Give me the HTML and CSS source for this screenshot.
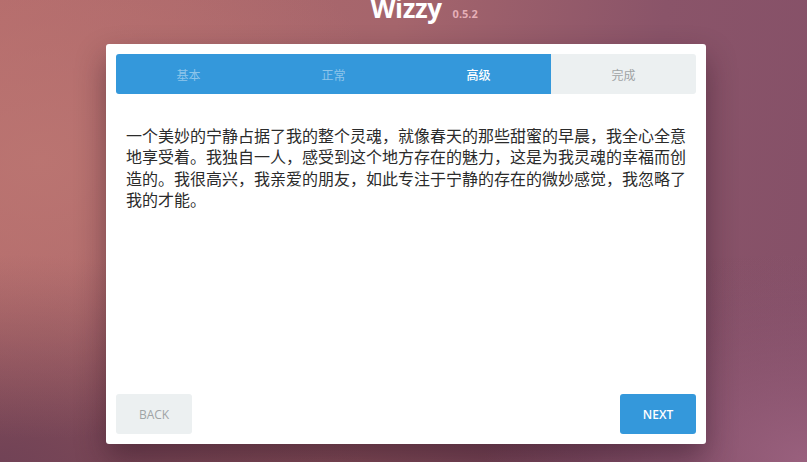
FILE: index.html
```html
<!DOCTYPE html>
<html lang="zh">
<head>
<meta charset="utf-8">
<title>Wizzy</title>
<link rel="stylesheet" href="styles.css">
</head>
<body>
<div class="page">
  <header class="brand">
    <span class="brand-spacer"></span>
    <span class="brand-name">Wizzy</span>
    <span class="brand-version">0.5.2</span>
  </header>
  <main class="wizard">
    <nav class="steps">
      <div class="step step-done">基本</div>
      <div class="step step-done">正常</div>
      <div class="step step-active">高级</div>
      <div class="step step-todo">完成</div>
    </nav>
    <section class="content">
      <p>一个美妙的宁静占据了我的整个灵魂，就像春天的那些甜蜜的早晨，我全心全意地享受着。我独自一人，感受到这个地方存在的魅力，这是为我灵魂的幸福而创造的。我很高兴，我亲爱的朋友，如此专注于宁静的存在的微妙感觉，我忽略了我的才能。</p>
    </section>
    <footer class="actions">
      <button class="btn btn-back">BACK</button>
      <button class="btn btn-next">NEXT</button>
    </footer>
  </main>
</div>
</body>
</html>
```

FILE: styles.css
```css
html, body {
  margin: 0;
  padding: 0;
  height: 100%;
}
body {
  font-family: "Open Sans", "Noto Sans CJK SC", sans-serif;
  background:
    radial-gradient(ellipse 45% 60% at 5% 35%, rgba(188, 118, 114, 0.85), rgba(188, 118, 114, 0) 100%),
    radial-gradient(ellipse 40% 45% at 100% 100%, rgba(158, 100, 130, 0.9), rgba(158, 100, 130, 0) 100%),
    radial-gradient(ellipse 45% 45% at 0% 100%, rgba(112, 66, 86, 0.95), rgba(112, 66, 86, 0) 100%),
    linear-gradient(180deg, rgba(0, 0, 0, 0) 55%, rgba(70, 30, 50, 0.35) 100%),
    linear-gradient(100deg, #b36a6b 0%, #a5656c 45%, #8a5469 75%, #855068 100%);
  overflow: hidden;
}
.page {
  display: flex;
  flex-direction: column;
  align-items: center;
  height: 100%;
  padding-left: 5px;
  box-sizing: border-box;
}
.brand {
  align-self: stretch;
  margin-top: -9px;
  height: 34px;
  line-height: 34px;
  display: grid;
  grid-template-columns: 1fr auto 1fr;
  align-items: baseline;
  margin-bottom: 19px;
}
.brand-name {
  font-family: "Open Sans", sans-serif;
  font-weight: 700;
  font-size: 26px;
  letter-spacing: -0.4px;
  color: #ffffff;
}
.brand-version {
  justify-self: start;
  margin-left: 11px;
  font-family: "Open Sans", sans-serif;
  font-weight: 700;
  font-size: 11px;
  color: rgba(244, 190, 198, 0.85);
}
.wizard {
  width: 600px;
  height: 400px;
  box-sizing: border-box;
  padding: 10px;
  background: #ffffff;
  border-radius: 3px;
  box-shadow: 0 14px 30px rgba(40, 15, 30, 0.45);
  display: flex;
  flex-direction: column;
}
.steps {
  display: grid;
  grid-template-columns: repeat(4, 1fr);
  height: 40px;
  border-radius: 3px;
  overflow: hidden;
}
.step {
  display: flex;
  align-items: center;
  justify-content: center;
  font-family: "Noto Sans CJK SC", sans-serif;
  font-size: 12px;
}
.step-done {
  background: #3498db;
  color: rgba(255, 255, 255, 0.45);
}
.step-active {
  background: #3498db;
  color: #ffffff;
  font-weight: 500;
}
.step-todo {
  background: #ecf0f1;
  color: #9fa3a5;
}
.content {
  flex: 1;
  padding: 31px 10px 0;
}
.content p {
  margin: 0;
  font-family: "Noto Sans CJK SC", sans-serif;
  font-size: 16px;
  line-height: 21.3px;
  color: #2b2b2b;
}
.actions {
  display: flex;
  justify-content: space-between;
}
.btn {
  width: 76px;
  height: 40px;
  border: none;
  border-radius: 3px;
  font-family: "Open Sans", sans-serif;
  font-size: 12px;
  padding: 0;
}
.btn-back {
  background: #ecf0f1;
  color: #a0a4a6;
}
.btn-next {
  background: #3498db;
  color: #ffffff;
  font-weight: 600;
}
```
